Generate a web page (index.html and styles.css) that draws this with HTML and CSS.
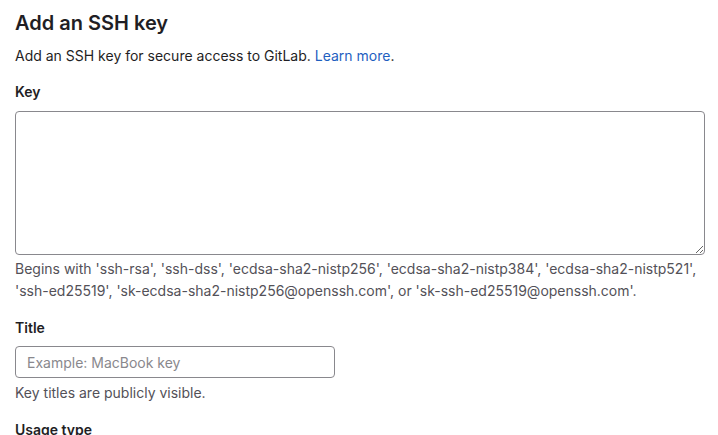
FILE: index.html
```html
<!DOCTYPE html>
<html>
<head>
<meta charset="utf-8">
<link rel="stylesheet" href="styles.css">
</head>
<body>
<div class="page">
  <h2 class="title">Add an SSH key</h2>
  <p class="lead">Add an SSH key for secure access to GitLab. <a href="#" class="link">Learn more</a>.</p>
  <div class="group">
    <label class="label label-key">Key</label>
    <textarea class="textarea"></textarea>
    <p class="help help-key">Begins with 'ssh-rsa', 'ssh-dss', 'ecdsa-sha2-nistp256', 'ecdsa-sha2-nistp384', 'ecdsa-sha2-nistp521', 'ssh-ed25519', 'sk-ecdsa-sha2-nistp256@openssh.com', or 'sk-ssh-ed25519@openssh.com'.</p>
  </div>
  <div class="group">
    <label class="label">Title</label>
    <input class="input" type="text" placeholder="Example: MacBook key">
    <p class="help">Key titles are publicly visible.</p>
  </div>
  <div class="group">
    <label class="label">Usage type</label>
  </div>
</div>
</body>
</html>
```
FILE: styles.css
```css
html, body {
  margin: 0;
  padding: 0;
  background: #fff;
}
body {
  font-family: Inter, "Noto Sans", sans-serif;
  color: #3a383f;
  font-size: 14px;
}
.page {
  padding: 9px 13px 0 15px;
}
.title {
  margin: 0;
  font-size: 20px;
  line-height: 28px;
  font-weight: 600;
  color: #1f1e24;
}
.lead {
  margin: 9px 0 0;
  line-height: 20px;
  color: #1f1e24;
}
.link {
  color: #1f5fbf;
  text-decoration: none;
}
.group {
  margin-top: 16px;
}
.label {
  display: block;
  font-weight: 600;
  line-height: 20px;
  color: #1f1e24;
  margin-bottom: 8px;
}
.label-key {
  margin-bottom: 9px;
}
.textarea {
  display: block;
  box-sizing: border-box;
  width: 690px;
  height: 144px;
  margin: 0;
  border: 1px solid #89888d;
  border-radius: 4px;
  font-family: inherit;
}
.input {
  display: block;
  box-sizing: border-box;
  width: 320px;
  height: 32px;
  margin: 0;
  padding: 0 11px;
  border: 1px solid #89888d;
  border-radius: 4px;
  font-family: inherit;
  font-size: 14px;
  color: #1f1e24;
}
.input::placeholder {
  color: #89888d;
}
.help {
  margin: 4px 0 0;
  line-height: 22px;
  color: #535158;
}
.help-key {
  margin-top: 3px;
}
```
